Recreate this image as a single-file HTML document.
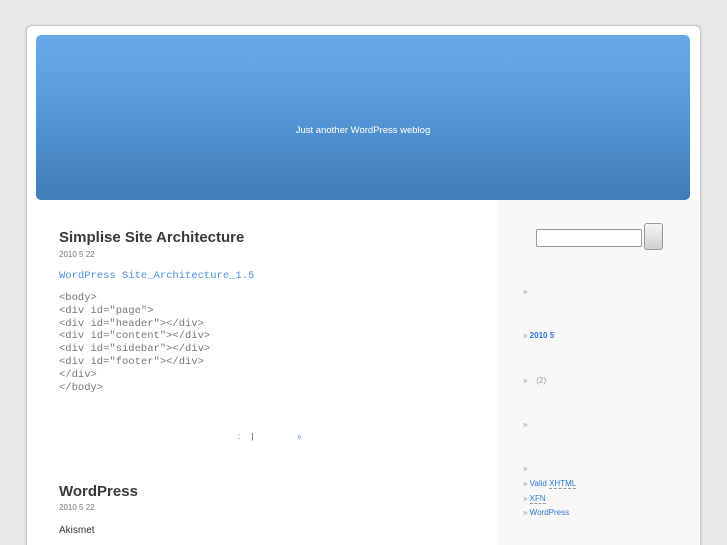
<!DOCTYPE html>
<html style="height:545px;overflow:hidden"><head><meta charset="utf-8"><style>
body{margin:0;background:#e7e7e7;font-family:"Liberation Sans",sans-serif;width:727px;height:545px;overflow:hidden;position:relative}
#page{position:absolute;left:26px;top:25px;width:673px;height:520px;background:#fff;border:1px solid #c9c9c9;border-bottom:none;border-radius:6px 6px 0 0;box-shadow:0 0 2px #ccc}
#header{position:absolute;left:36px;top:35px;width:654px;height:165px;border-radius:5px;background:linear-gradient(#68aae8,#5898d8 45%,#3f7cb8)}
#desc{position:absolute;left:0;right:0;text-align:center;color:#fff;font-size:9.5px}
#side{position:absolute;left:497px;top:200px;width:202px;height:345px;background:#f8f8f8}
.t{position:absolute;white-space:nowrap}
h2{margin:0;font-size:15px;font-weight:bold;color:#3a3a3a}
.d{font-size:8px;color:#777}
.code{font-family:"Liberation Mono",monospace;font-size:10.5px;line-height:12.8px;color:#777}
.a{color:#4a90dc}
.s{font-size:8px;color:#999}
.s b{font-weight:normal;color:#2c7ad6}
</style></head><body>
<div id="page"></div>
<div id="header"><div id="desc" style="top:90px">Just another WordPress weblog</div></div>
<div id="side"></div>
<div class="t" style="left:59px;top:229px"><h2>Simplise Site Architecture</h2></div>
<div class="t d" style="left:59px;top:250px">2010 5 22</div>
<div class="t code a" style="left:59px;top:270px">WordPress Site_Architecture_1.5</div>
<div class="t code" style="left:59px;top:292px">&lt;body&gt;<br>&lt;div id="page"&gt;<br>&lt;div id="header"&gt;&lt;/div&gt;<br>&lt;div id="content"&gt;&lt;/div&gt;<br>&lt;div id="sidebar"&gt;&lt;/div&gt;<br>&lt;div id="footer"&gt;&lt;/div&gt;<br>&lt;/div&gt;<br>&lt;/body&gt;</div>
<div class="t d" style="left:238px;top:432px">:&nbsp;&nbsp;&nbsp;&nbsp;&nbsp;<span style="color:#333">|</span></div>
<div class="t d a" style="left:297px;top:432px">»</div>
<div class="t" style="left:59px;top:483px"><h2>WordPress</h2></div>
<div class="t d" style="left:59px;top:503px">2010 5 22</div>
<div class="t" style="left:59px;top:525px;font-size:10px;color:#333">Akismet</div>
<div class="t" style="left:536px;top:229px;width:104px;height:16px;border:1px solid #999;border-radius:2px;background:#fff"></div>
<div class="t" style="left:644px;top:223px;width:17px;height:25px;border:1px solid #999;border-radius:3px;background:linear-gradient(#f4f4f4,#cfcfcf)"></div>
<div class="t s" style="left:523px;top:287px">»</div>
<div class="t s" style="left:523px;top:331px">» <b style="font-weight:bold">2010 5</b></div>
<div class="t s" style="left:523px;top:376px">» &nbsp;&nbsp;&nbsp;(2)</div>
<div class="t s" style="left:523px;top:420px">»</div>
<div class="t s" style="left:523px;top:464px">»</div>
<div class="t s" style="left:523px;top:479px">» <b>Valid <span style="border-bottom:1px dashed #999">XHTML</span></b></div>
<div class="t s" style="left:523px;top:494px">» <b><span style="border-bottom:1px dashed #999">XFN</span></b></div>
<div class="t s" style="left:523px;top:508px">» <b>WordPress</b></div>
</body></html>
